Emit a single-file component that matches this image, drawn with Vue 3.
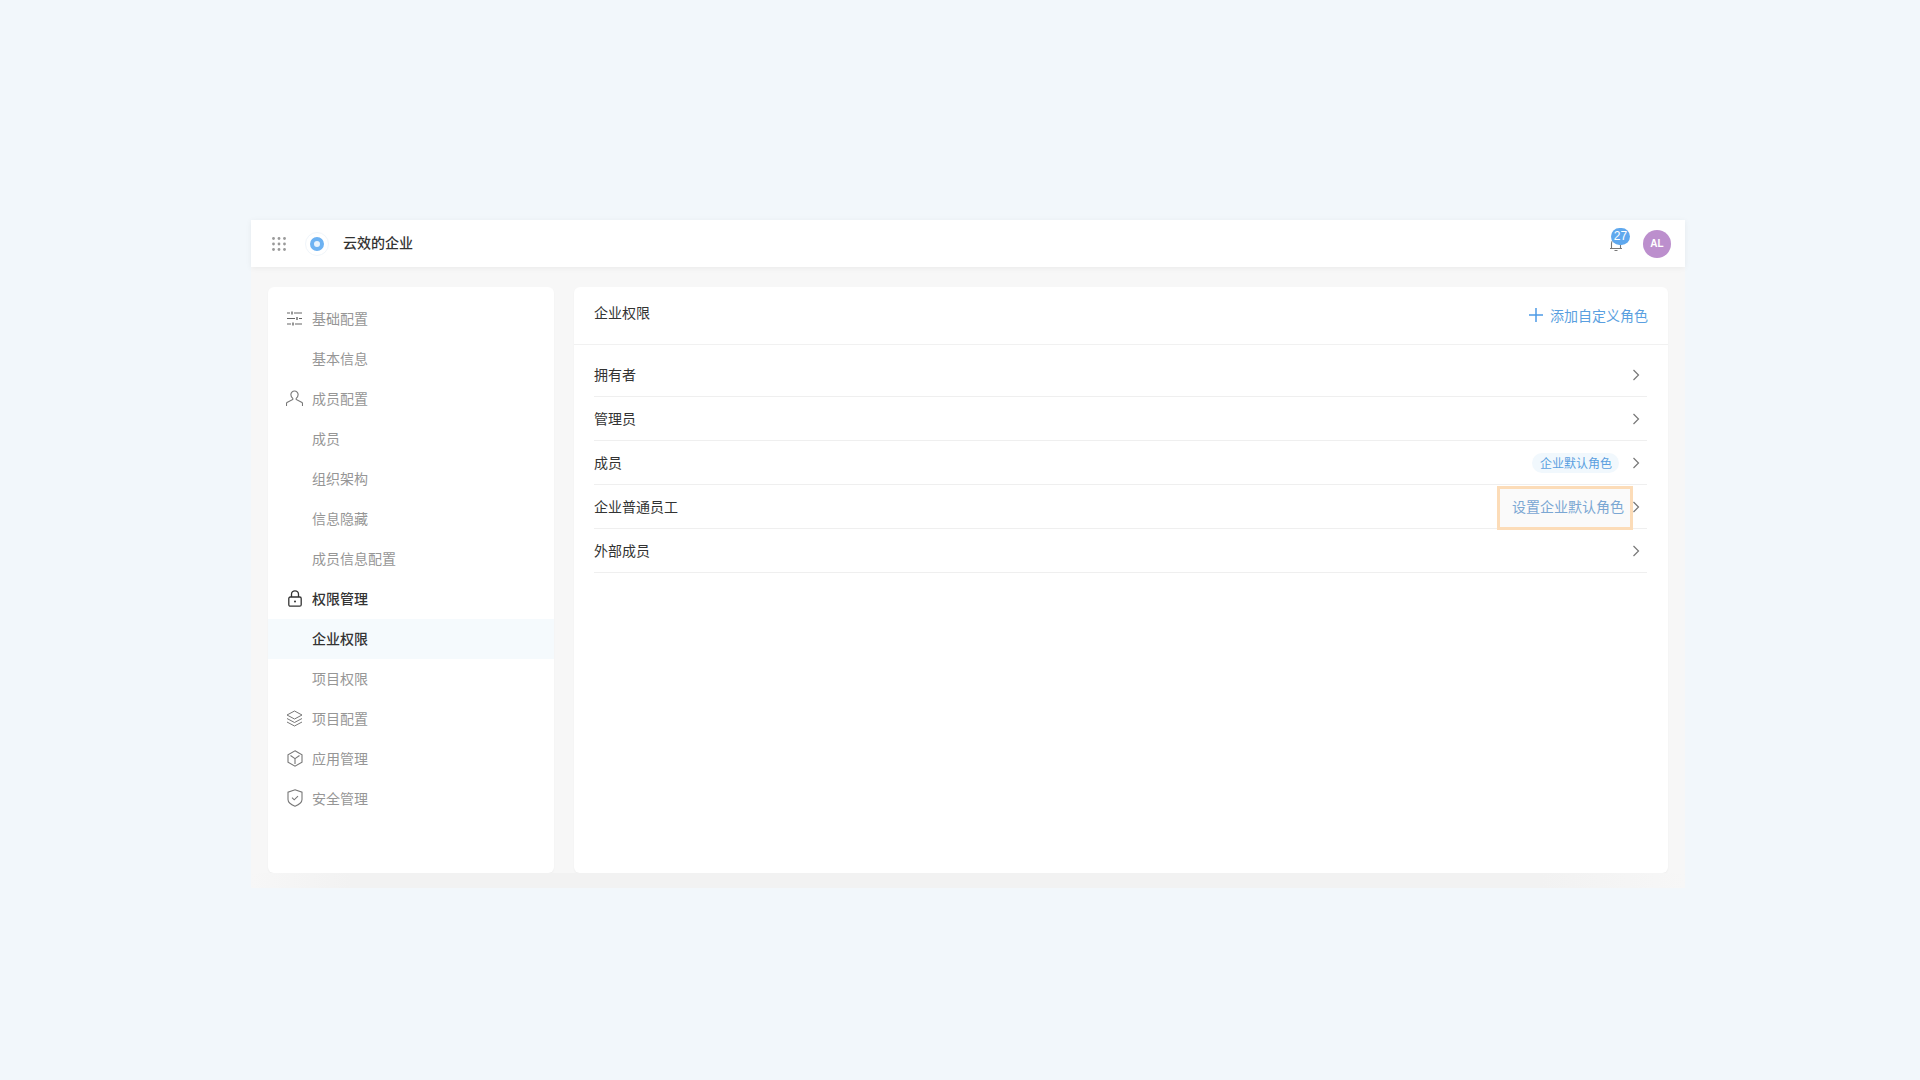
<script setup>
const nav = [
  { label: '基础配置', icon: 'sliders' },
  { label: '基本信息' },
  { label: '成员配置', icon: 'user' },
  { label: '成员' },
  { label: '组织架构' },
  { label: '信息隐藏' },
  { label: '成员信息配置' },
  { label: '权限管理', icon: 'lock', strong: true },
  { label: '企业权限', active: true },
  { label: '项目权限' },
  { label: '项目配置', icon: 'layers' },
  { label: '应用管理', icon: 'box' },
  { label: '安全管理', icon: 'shield' }
]
const rows = [
  { label: '拥有者' },
  { label: '管理员' },
  { label: '成员', tag: '企业默认角色' },
  { label: '企业普通员工', action: '设置企业默认角色' },
  { label: '外部成员' }
]
const dots = [0, 1, 2].flatMap(y => [0, 1, 2].map(x => ({ x: 1.5 + x * 5.5, y: 1.5 + y * 5.5 })))
</script>

<template>
  <div class="page">
    <div class="frame">
      <header class="topbar">
        <svg class="grid" width="14" height="14" viewBox="0 0 14 14">
          <circle v-for="(d, i) in dots" :key="i" :cx="d.x" :cy="d.y" r="1.4" fill="#9a9a9a" />
        </svg>
        <span class="logo"><span class="logo-ring"></span></span>
        <span class="org">云效的企业</span>
        <span class="spacer"></span>
        <span class="bell">
          <svg width="14" height="14" viewBox="0 0 14 14" fill="none" stroke="#777" stroke-width="1.1">
            <path d="M2.500 10.500V5.500a4.500 4.500 0 0 1 9 0v5M1 10.500h12M5.500 12.500h3" />
          </svg>
          <span class="badge">27</span>
        </span>
        <span class="avatar">AL</span>
      </header>

      <div class="body">
        <aside class="sidebar">
          <div
            v-for="item in nav"
            :key="item.label"
            class="nav-item"
            :class="{ strong: item.strong, active: item.active }"
          >
            <span class="nav-icon">
              <svg v-if="item.icon === 'sliders'" width="15" height="15" viewBox="0 0 15 15" fill="none" stroke="#666" stroke-width="1.100">
                <path d="M0 2h3M7 2h8M0 7.500h8M12 7.500h3M0 13h4M8 13h7" />
                <path d="M5 .5v3M10 6v3M6 11.500v3" stroke-width="1.400" />
              </svg>
              <svg v-else-if="item.icon === 'user'" width="17" height="17" viewBox="0 0 17 17" fill="none" stroke="#777" stroke-width="1.100">
                <path d="M8.500 1a3.600 3.600 0 0 0-3.600 3.700c0 1.900 1 3 1.900 3.700v1.100L1 12.500c-.4.300-.5.700-.5 1.200V16M8.500 1a3.600 3.600 0 0 1 3.600 3.700c0 1.900-1 3-1.900 3.700v1.100l5.800 3c.4.300.5.700.5 1.200V16" />
              </svg>
              <svg v-else-if="item.icon === 'lock'" width="16" height="17" viewBox="0 0 16 17" fill="none" stroke="#333" stroke-width="1.300">
                <rect x="1.800" y="7" width="12.400" height="9.200" rx="1.500" />
                <path d="M4.500 7V4.300a3.500 3.500 0 0 1 7 0V7" />
                <circle cx="8" cy="11.500" r="1" fill="#333" stroke="none" />
              </svg>
              <svg v-else-if="item.icon === 'layers'" width="17" height="17" viewBox="0 0 17 17" fill="none" stroke="#777" stroke-width="1">
                <path d="M8.500 1 16 5 8.500 9 1 5z" />
                <path d="M1 8.500l7.500 4 7.500-4M1 12l7.500 4 7.500-4" />
              </svg>
              <svg v-else-if="item.icon === 'box'" width="16" height="17" viewBox="0 0 16 17" fill="none" stroke="#777" stroke-width="1.100">
                <path d="M8 .8l7 4v7.400l-7 4-7-4V4.800z" />
                <path d="M3.500 5.500 8 8.600l4.500-3.100M8 8.600V14" />
              </svg>
              <svg v-else-if="item.icon === 'shield'" width="16" height="18" viewBox="0 0 16 18" fill="none" stroke="#777" stroke-width="1.100">
                <path d="M8 .8l7 2.400v7.300c0 3-3.500 5.300-7 6.700-3.500-1.400-7-3.700-7-6.700V3.200z" />
                <path d="M5 8.700l2.200 2.100L11 7.200" />
              </svg>
            </span>
            <span>{{ item.label }}</span>
          </div>
        </aside>

        <main class="content">
          <div class="content-head">
            <span class="content-title">企业权限</span>
            <span class="add">
              <svg width="14" height="14" viewBox="0 0 14 14" stroke="#4d9be6" stroke-width="1.500">
                <path d="M7 0v14M0 7h14" />
              </svg>
              添加自定义角色
            </span>
          </div>
          <div class="rows">
            <div v-for="row in rows" :key="row.label" class="row">
              <span class="row-label">{{ row.label }}</span>
              <span v-if="row.tag" class="tag">{{ row.tag }}</span>
              <svg class="chev" width="8" height="12" viewBox="0 0 8 12" fill="none" stroke="#777" stroke-width="1.200">
                <path d="M1.500 1l5 5-5 5" />
              </svg>
              <span v-if="row.action" class="highlight">{{ row.action }}</span>
            </div>
          </div>
        </main>
      </div>
      <div class="frame-foot"></div>
    </div>
  </div>
</template>

<style>
html, body { margin: 0; background: #f2f7fb; }
</style>

<style scoped>
.page {
  height: 1080px;
  box-sizing: border-box;
  padding: 220px 235px 0 251px;
  font-family: "Noto Sans CJK SC", "Liberation Sans", sans-serif;
  font-size: 14px;
  color: #333;
}
.frame {
  height: 668px;
  background: #f7f7f7;
  display: flex;
  flex-direction: column;
}
.frame-foot {
  flex: 1;
  background: linear-gradient(90deg, #f7f7f7, #f2f2f2 7%, #f2f2f2 90%, #f7f7f7);
}
.topbar {
  height: 47px;
  flex: none;
  background: #fff;
  box-shadow: 0 1px 6px rgba(0, 0, 0, 0.06);
  display: flex;
  align-items: center;
  padding: 0 14px 0 21px;
  position: relative;
}
.grid { flex: none; }
.logo {
  width: 24px;
  height: 24px;
  margin-left: 19px;
  border-radius: 50%;
  border: 1px solid #f0f5fa;
  box-sizing: border-box;
  display: flex;
  align-items: center;
  justify-content: center;
}
.logo-ring {
  width: 14px;
  height: 14px;
  box-sizing: border-box;
  border-radius: 50%;
  border: 4px solid #6db2f2;
  background: #e6f2fd;
}
.org {
  margin: 0 0 3px 14px;
  font-weight: 500;
  color: #333;
}
.spacer { flex: 1; }
.bell {
  position: relative;
  width: 14px;
  height: 14px;
  margin-right: 20px;
  margin-top: 2px;
  display: flex;
}
.badge {
  position: absolute;
  left: 2px;
  top: -10px;
  width: 19px;
  height: 17px;
  border-radius: 9px;
  background: #5fa8ee;
  color: #fff;
  font-family: "Liberation Sans", sans-serif;
  font-size: 12px;
  line-height: 17px;
  text-align: center;
}
.avatar {
  width: 28px;
  height: 28px;
  border-radius: 50%;
  background: #bc8fcd;
  color: #fff;
  font-family: "Liberation Sans", sans-serif;
  font-size: 10px;
  font-weight: 700;
  line-height: 28px;
  text-align: center;
}
.body {
  display: flex;
  gap: 20px;
  padding: 20px 17px 0;
}
.sidebar, .content {
  height: 586px;
  background: #fff;
  border-radius: 6px;
  box-shadow: 0 1px 2px rgba(0, 0, 0, 0.04);
}
.sidebar {
  width: 286px;
  flex: none;
  box-sizing: border-box;
  padding-top: 12px;
}
.nav-item {
  height: 40px;
  box-sizing: border-box;
  padding-bottom: 2px;
  display: flex;
  align-items: center;
  color: #969696;
}
.nav-item.strong { color: #333; font-weight: 500; }
.nav-item.active { color: #333; font-weight: 500; background: #f5fafd; }
.nav-icon {
  width: 17px;
  height: 18px;
  margin: 0 9px 0 18px;
  display: flex;
  align-items: center;
  justify-content: center;
  flex: none;
}
.content {
  flex: 1;
  min-width: 0;
}
.content-head {
  height: 57px;
  border-bottom: 1px solid #f1f1f1;
  display: flex;
  justify-content: space-between;
  padding: 0 20px;
}
.content-title {
  line-height: 50px;
  color: #333;
}
.add {
  color: #5a9fe0;
  display: flex;
  align-items: center;
  gap: 7px;
  height: 56px;
}
.rows { padding: 8px 21px 0 20px; }
.row {
  height: 44px;
  box-sizing: border-box;
  border-bottom: 1px solid #efefef;
  display: flex;
  align-items: center;
  position: relative;
  padding-right: 7px;
}
.row-label { flex: 1; color: #333; margin-bottom: 2px; }
.tag {
  height: 20px;
  padding: 0 7px 0 8px;
  margin-right: 12px;
  border-radius: 10px;
  background: #f1f8fd;
  color: #5a9fe0;
  font-size: 12px;
  line-height: 20px;
  transform: translateX(-1px);
}
.chev { flex: none; }
.highlight {
  position: absolute;
  right: 14px;
  top: 1px;
  width: 136px;
  height: 44px;
  box-sizing: border-box;
  border: 3px solid #fcdcb8;
  background: #fafafa;
  color: #7ba7d3;
  line-height: 35px;
  padding-left: 12px;
}
</style>
